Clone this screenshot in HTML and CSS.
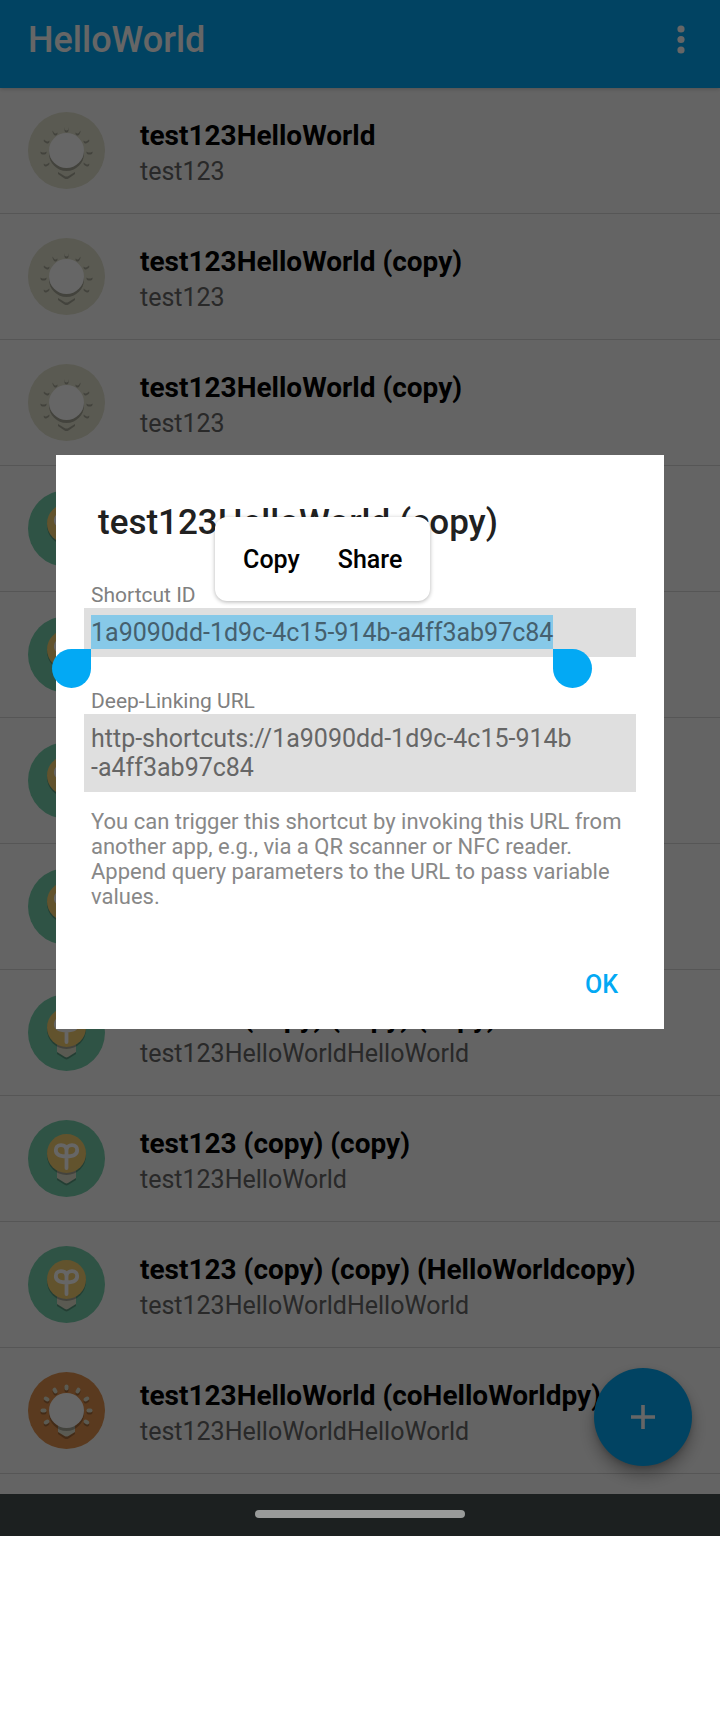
FILE: index.html
```html
<!DOCTYPE html>
<html lang="en">
<head>
<meta charset="utf-8">
<meta name="viewport" content="width=device-width, initial-scale=1">
<title>HelloWorld</title>
<link rel="stylesheet" href="styles.css">
</head>
<body>
<svg class="sprite" aria-hidden="true">
  <defs>
    <g id="rays">
      <rect x="-2" y="-26" width="4" height="6" rx="2" transform="rotate(-120)"/>
      <rect x="-2" y="-26" width="4" height="6" rx="2" transform="rotate(-90)"/>
      <rect x="-2" y="-26" width="4" height="6" rx="2" transform="rotate(-60)"/>
      <rect x="-2" y="-26" width="4" height="6" rx="2" transform="rotate(-30)"/>
      <rect x="-2" y="-26" width="4" height="6" rx="2"/>
      <rect x="-2" y="-26" width="4" height="6" rx="2" transform="rotate(30)"/>
      <rect x="-2" y="-26" width="4" height="6" rx="2" transform="rotate(60)"/>
      <rect x="-2" y="-26" width="4" height="6" rx="2" transform="rotate(90)"/>
      <rect x="-2" y="-26" width="4" height="6" rx="2" transform="rotate(120)"/>
    </g>
    <g id="glow">
      <g class="shade"><use href="#rays" y="2"/><path d="M-8.5 16H8.5V23.5L2 27.9Q0 29 -2 27.9L-8.5 23.5Z"/></g>
      <use href="#rays" class="base"/>
      <path class="base" d="M-8.5 14H8.5V21.5L2 25.4Q0 26.5 -2 25.4L-8.5 21.5Z"/>
      <circle class="shade" cy="3" r="17.5"/>
      <circle class="white" r="17.5"/>
    </g>
    <symbol id="bulb-beige" viewBox="-38.5 -38.5 77 77"><circle class="beige" r="38.5"/><use href="#glow"/></symbol>
    <symbol id="bulb-orange" viewBox="-38.5 -38.5 77 77"><circle class="orange" r="38.5"/><use href="#glow"/></symbol>
    <symbol id="bulb-green" viewBox="-38.5 -38.5 77 77">
      <circle class="green" r="38.5"/>
      <path class="shade" d="M-9.5 12H9.5V21.5L1.5 26.5Q0 27.3 -1.5 26.5L-9.5 21.5Z"/>
      <path class="base" d="M-9.5 10H9.5V19.5L1.5 24.5Q0 25.3 -1.5 24.5L-9.5 19.5Z"/>
      <circle class="shade" cy="-3" r="19.5"/>
      <circle class="yellow" cy="-5" r="19.5"/>
      <path class="filament" d="M0 9.5V-8C0-12-2.5-13.3-5.5-13.3C-9-13.3-10.7-11-10.7-8.5C-10.7-4-6-2 0-2C6-2 10.7-4 10.7-8.5C10.7-11 9-13.3 5.5-13.3C2.5-13.3 0-12 0-8"/>
    </symbol>
  </defs>
</svg>

<div class="screen">
  <div class="app">
    <header class="app-bar">
      <h1 class="app-title">HelloWorld</h1>
      <button class="menu-button" type="button" aria-label="More options">
        <svg width="8" height="29" viewBox="0 0 8 29" fill="currentColor"><circle cx="4" cy="4" r="3.6"/><circle cx="4" cy="14.5" r="3.6"/><circle cx="4" cy="25" r="3.6"/></svg>
      </button>
    </header>
    <ul class="list">
      <li class="row"><svg class="icon"><use href="#bulb-beige"/></svg><div class="texts"><div class="name">test123HelloWorld</div><div class="desc">test123</div></div></li>
      <li class="row"><svg class="icon"><use href="#bulb-beige"/></svg><div class="texts"><div class="name">test123HelloWorld (copy)</div><div class="desc">test123</div></div></li>
      <li class="row"><svg class="icon"><use href="#bulb-beige"/></svg><div class="texts"><div class="name">test123HelloWorld (copy)</div><div class="desc">test123</div></div></li>
      <li class="row"><svg class="icon"><use href="#bulb-green"/></svg></li>
      <li class="row"><svg class="icon"><use href="#bulb-green"/></svg></li>
      <li class="row"><svg class="icon"><use href="#bulb-green"/></svg></li>
      <li class="row"><svg class="icon"><use href="#bulb-green"/></svg></li>
      <li class="row"><svg class="icon"><use href="#bulb-green"/></svg><div class="texts"><div class="name">test123 (copy) (copy) (copy)</div><div class="desc">test123HelloWorldHelloWorld</div></div></li>
      <li class="row"><svg class="icon"><use href="#bulb-green"/></svg><div class="texts"><div class="name">test123 (copy) (copy)</div><div class="desc">test123HelloWorld</div></div></li>
      <li class="row"><svg class="icon"><use href="#bulb-green"/></svg><div class="texts"><div class="name">test123 (copy) (copy) (HelloWorldcopy)</div><div class="desc">test123HelloWorldHelloWorld</div></div></li>
      <li class="row"><svg class="icon"><use href="#bulb-orange"/></svg><div class="texts"><div class="name">test123HelloWorld (coHelloWorldpy)</div><div class="desc">test123HelloWorldHelloWorld</div></div></li>
    </ul>
    <button class="fab" type="button" aria-label="Add shortcut">
      <svg width="26" height="26" viewBox="0 0 26 26" fill="none" stroke="currentColor" stroke-width="3.6"><path d="M13 1V25M1 13H25"/></svg>
    </button>
    <div class="backdrop">
      <section class="dialog" role="dialog" aria-modal="true" aria-labelledby="dialog-title">
        <h2 class="dialog-title" id="dialog-title">test123HelloWorld (copy)</h2>
        <div class="label">Shortcut ID</div>
        <div class="value">
          <mark class="selection">1a9090dd-1d9c-4c15-914b-a4ff3ab97c84<span class="handle handle-start"></span><span class="handle handle-end"></span><span class="popup"><button class="popup-action" type="button">Copy</button><button class="popup-action" type="button">Share</button></span></mark>
        </div>
        <div class="label label-next">Deep-Linking URL</div>
        <div class="value">http-shortcuts://1a9090dd-1d9c-4c15-914b<br>-a4ff3ab97c84</div>
        <p class="help">You can trigger this shortcut by invoking this URL from another app, e.g., via a QR scanner or NFC reader. Append query parameters to the URL to pass variable values.</p>
        <div class="actions"><button class="ok" type="button">OK</button></div>
      </section>
    </div>
  </div>
  <div class="nav-bar"><span class="nav-pill"></span></div>
</div>
</body>
</html>
```
FILE: styles.css
```css
* { box-sizing: border-box; }

body {
  margin: 0;
  background: #fff;
  font-family: Roboto, "Liberation Sans", sans-serif;
}

button {
  border: 0;
  padding: 0;
  background: none;
  font: inherit;
  cursor: pointer;
}

.sprite { position: absolute; width: 0; height: 0; }
.shade { fill: #000; fill-opacity: .25; }
.base, .beige { fill: #e0e0cc; }
.white { fill: #fff; }
.orange { fill: #e0914e; }
.green { fill: #76cfac; }
.yellow { fill: #f5cf70; }
.filament {
  fill: none;
  stroke: #fff;
  stroke-width: 3.8;
  stroke-linecap: round;
  stroke-linejoin: round;
}

.app { position: relative; background: #fafafa; }

.app-bar {
  position: relative;
  display: flex;
  justify-content: space-between;
  align-items: flex-start;
  height: 88px;
  padding: 19px 35px 0 28px;
  background: #03a9f4;
  color: #fff;
  box-shadow: 0 1px 4px rgba(0, 0, 0, .2);
}

.app-title {
  margin: 0;
  font-size: 36px;
  line-height: 43px;
  font-weight: 500;
}

.menu-button { display: flex; padding-top: 6px; color: #fff; }

.list { margin: 0; padding: 0 0 20px; list-style: none; }

.row {
  display: flex;
  align-items: center;
  gap: 35px;
  height: 126px;
  padding: 0 28px;
  border-bottom: 1px solid #d6d6d6;
}

.icon { flex: none; width: 77px; height: 77px; }
.texts { min-width: 0; padding-top: 7px; white-space: nowrap; }
.name { font-size: 28px; line-height: 36px; font-weight: 700; color: #000; }
.desc { font-size: 25px; line-height: 36px; color: #666; }

.fab {
  position: absolute;
  right: 28px;
  bottom: 28px;
  display: grid;
  place-items: center;
  width: 98px;
  height: 98px;
  border-radius: 50%;
  background: #03a9f4;
  color: #fff;
  box-shadow: 0 9px 16px rgba(0, 0, 0, .3), 0 2px 5px rgba(0, 0, 0, .15);
}

.backdrop {
  position: absolute;
  inset: 0;
  display: flex;
  align-items: center;
  padding: 0 56px 11px;
  background: rgba(0, 0, 0, .6);
}

.dialog {
  flex: 1;
  padding: 47px 28px 16px;
  background: #fff;
}

.dialog-title {
  margin: 0 14px 38px;
  font-size: 35px;
  line-height: 42px;
  font-weight: 500;
  color: #212121;
}

.label {
  padding: 0 7px;
  font-size: 21px;
  line-height: 26px;
  color: #808080;
}

.label-next { margin-top: 31px; }

.value {
  padding: 10px 7px;
  background: #dfdfdf;
  font-size: 25px;
  line-height: 29px;
  color: #666;
}

.selection {
  position: relative;
  display: inline-block;
  margin: -3px 0;
  padding: 3px 0 2px;
  background: #87c9e8;
  color: #45606e;
}

.handle {
  position: absolute;
  top: 100%;
  width: 39px;
  height: 39px;
  background: #03a9f4;
}

.handle-start { right: 100%; border-radius: 50% 0 50% 50%; }
.handle-end { left: 100%; border-radius: 0 50% 50% 50%; }

.popup {
  position: absolute;
  bottom: 100%;
  left: 50%;
  display: flex;
  justify-content: center;
  gap: 38px;
  width: 215px;
  margin-bottom: 14px;
  margin-left: -107px;
  padding: 28px 0 27px;
  border-radius: 12px;
  background: #fff;
  box-shadow: 0 1px 4px rgba(0, 0, 0, .3);
}

.popup-action { font-size: 25px; line-height: 29px; font-weight: 500; color: #000; }

.help {
  margin: 17px 7px 0;
  font-size: 22px;
  line-height: 25px;
  color: #888;
}

.actions { display: flex; justify-content: flex-end; margin-top: 47px; }
.ok {
  padding: 14px 18px;
  font-size: 25px;
  line-height: 29px;
  font-weight: 500;
  color: #03a9f4;
}

.nav-bar {
  display: grid;
  place-items: center;
  height: 42px;
  padding-bottom: 2px;
  background: #1c2020;
}

.nav-pill { width: 210px; height: 8px; border-radius: 4px; background: #999b9a; }
```
